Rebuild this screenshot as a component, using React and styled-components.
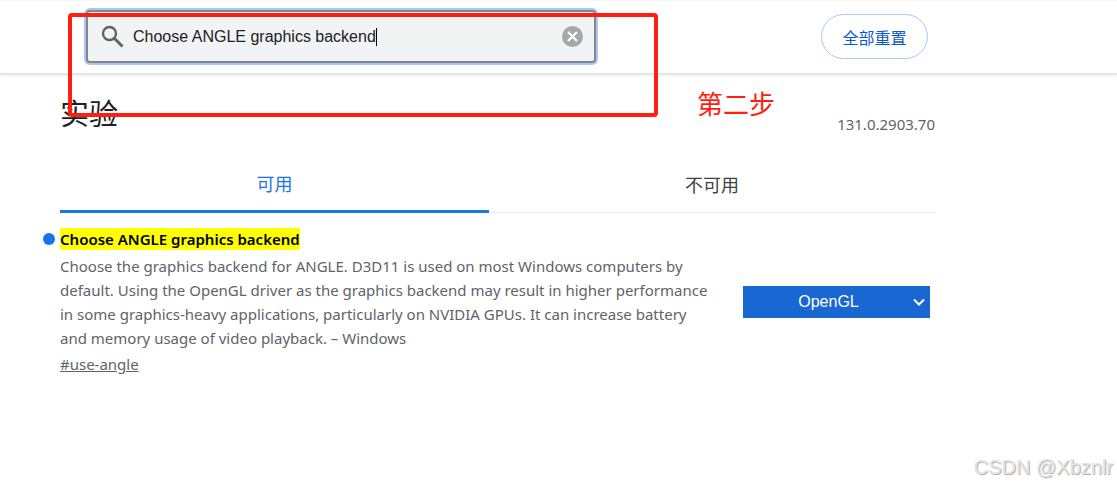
import React, { useState } from "react";
import styled, { createGlobalStyle } from "styled-components";

const GlobalStyle = createGlobalStyle`
  * {
    box-sizing: border-box;
  }

  body {
    margin: 0;
    background: #fff;
    color: #202124;
    font-family: "Noto Sans", "Noto Sans CJK SC", sans-serif;
    font-size: 15px;
  }
`;

const Page = styled.div`
  position: relative;
  min-height: 100vh;
`;

const Header = styled.header`
  border-top: 1px solid #f8f8f8;
  box-shadow: 0 1px 3px 1px rgba(0, 0, 0, 0.14);
`;

const HeaderInner = styled.div`
  display: flex;
  align-items: center;
  justify-content: space-between;
  max-width: 928px;
  padding: 9px 0 10px 86px;
`;

const SearchBox = styled.div`
  display: flex;
  align-items: center;
  flex: 0 1 510px;
  height: 53px;
  padding: 0 11px 0 13px;
  background: #f1f3f4;
  border: 2px solid #858585;
  border-radius: 4px;
  box-shadow: 0 0 0 2px #a8c7fa;
`;

const SearchIcon = styled.svg`
  flex: none;
  width: 24px;
  height: 24px;
  margin-right: 8px;
`;

const SearchInput = styled.input`
  field-sizing: content;
  min-width: 1px;
  padding: 0;
  border: 0;
  outline: 0;
  background: none;
  color: #202124;
  font-family: "Liberation Sans", Arial, sans-serif;
  font-size: 16px;
  line-height: 20px;
`;

const Caret = styled.span`
  width: 1px;
  height: 18px;
  background: #000;
`;

const ClearButton = styled.button`
  display: flex;
  margin-left: auto;
  padding: 0;
  border: 0;
  background: none;
  cursor: pointer;
`;

const ResetButton = styled.button`
  width: 107px;
  height: 45px;
  padding: 0;
  border: 1px solid #a8c7fa;
  border-radius: 23px;
  background: #fff;
  color: #0b57d0;
  font-family: inherit;
  font-size: 16px;
  cursor: pointer;
`;

const Content = styled.main`
  max-width: 935px;
  padding: 20px 0 0 60px;
`;

const TitleRow = styled.div`
  display: flex;
  align-items: flex-end;
  justify-content: space-between;
`;

const Title = styled.h1`
  margin: 0;
  font-size: 29px;
  font-weight: 400;
  line-height: 42px;
`;

const Version = styled.span`
  color: #5f6368;
  font-size: 15px;
  line-height: 22px;
`;

const Tabs = styled.div`
  display: flex;
  margin-top: 20px;
`;

const Tab = styled.button`
  flex: ${({ $active }) => ($active ? "0 1 429px" : "1 1 0")};
  height: 58px;
  padding: 0;
  border: 0;
  border-bottom: ${({ $active }) =>
    $active ? "3px solid #1a73e8" : "1px solid #ececec"};
  background: none;
  color: ${({ $active }) => ($active ? "#1a73e8" : "#3c4043")};
  font-family: inherit;
  font-size: 18px;
  cursor: pointer;
`;

const Experiment = styled.section`
  display: flex;
  align-items: center;
  justify-content: space-between;
  padding: 15px 5px 0 0;
`;

const ExperimentText = styled.div`
  flex: 0 1 655px;
`;

const Name = styled.h2`
  display: flex;
  align-items: center;
  margin: 0 0 0 -17px;
  color: #000;
  font-size: 15px;
  font-weight: 600;
  line-height: 22px;

  &::before {
    content: "";
    width: 12px;
    height: 12px;
    margin-right: 5px;
    border-radius: 50%;
    background: #1a73e8;
  }
`;

const Highlight = styled.mark`
  background: #ff0;
  color: #000;
`;

const Description = styled.p`
  margin: 4px 0 3px;
  color: #5f6368;
  line-height: 24px;
`;

const Permalink = styled.a`
  color: #5f6368;
  line-height: 22px;
`;

const SelectWrap = styled.div`
  display: grid;
  align-items: center;
  width: 187px;
`;

const Select = styled.select`
  grid-area: 1 / 1;
  height: 32px;
  padding: 0 16px 0 0;
  appearance: none;
  border: 0;
  border-radius: 0;
  background: #1967d2;
  color: #fff;
  font-family: "Liberation Sans", Arial, sans-serif;
  font-size: 16px;
  text-align: center;
  text-align-last: center;
`;

const Chevron = styled.svg`
  grid-area: 1 / 1;
  justify-self: end;
  width: 12px;
  height: 8px;
  margin-right: 5px;
  pointer-events: none;
`;

/* Annotation layer drawn over the page */
const StepFrame = styled.div`
  position: absolute;
  top: 13px;
  left: 68px;
  width: 590px;
  height: 104px;
  border: 4px solid #ff1e10;
  border-radius: 4px;
  pointer-events: none;
`;

const StepLabel = styled.span`
  position: absolute;
  top: 85px;
  left: 697px;
  color: #ff1e10;
  font-size: 26px;
  line-height: 38px;
`;

const Watermark = styled.span`
  position: absolute;
  right: 4px;
  bottom: 6px;
  color: #e4e4e4;
  font-family: "Liberation Sans", Arial, sans-serif;
  font-size: 20px;
  line-height: 28px;
  text-shadow: 1px 1px 1px #aaa;
`;

const App = () => {
  const [query, setQuery] = useState("Choose ANGLE graphics backend");
  const [tab, setTab] = useState("可用");

  return (
    <>
      <GlobalStyle />
      <Page>
        <Header>
          <HeaderInner>
            <SearchBox>
              <SearchIcon viewBox="0 0 24 24" aria-hidden="true">
                <circle
                  cx="8.5"
                  cy="8.5"
                  r="6.5"
                  fill="none"
                  stroke="#5f6368"
                  strokeWidth="2.4"
                />
                <path
                  d="M13.5 13.5 L21.5 21.5"
                  stroke="#5f6368"
                  strokeWidth="3"
                />
              </SearchIcon>
              <SearchInput
                type="text"
                aria-label="搜索标志"
                value={query}
                onChange={(e) => setQuery(e.target.value)}
              />
              <Caret />
              <ClearButton aria-label="清除" onClick={() => setQuery("")}>
                <svg width="21" height="21" viewBox="0 0 21 21">
                  <circle cx="10.5" cy="10.5" r="10.5" fill="#a5a8ab" />
                  <path
                    d="M6 6 L15 15 M15 6 L6 15"
                    stroke="#fff"
                    strokeWidth="2.2"
                  />
                </svg>
              </ClearButton>
            </SearchBox>
            <ResetButton>全部重置</ResetButton>
          </HeaderInner>
        </Header>

        <Content>
          <TitleRow>
            <Title>实验</Title>
            <Version>131.0.2903.70</Version>
          </TitleRow>

          <Tabs role="tablist">
            {["可用", "不可用"].map((name) => (
              <Tab
                key={name}
                role="tab"
                aria-selected={tab === name}
                $active={tab === name}
                onClick={() => setTab(name)}
              >
                {name}
              </Tab>
            ))}
          </Tabs>

          <Experiment>
            <ExperimentText>
              <Name>
                <Highlight>Choose ANGLE graphics backend</Highlight>
              </Name>
              <Description>
                Choose the graphics backend for ANGLE. D3D11 is used on most
                Windows computers by default. Using the OpenGL driver as the
                graphics backend may result in higher performance in some
                graphics-heavy applications, particularly on NVIDIA GPUs. It can
                increase battery and memory usage of video playback. – Windows
              </Description>
              <Permalink href="#use-angle">#use-angle</Permalink>
            </ExperimentText>
            <SelectWrap>
              <Select
                aria-label="Choose ANGLE graphics backend"
                defaultValue="OpenGL"
              >
                <option>Default</option>
                <option>OpenGL</option>
                <option>D3D11</option>
              </Select>
              <Chevron viewBox="0 0 12 8" aria-hidden="true">
                <path
                  d="M1 1.5 L6 6.5 L11 1.5"
                  fill="none"
                  stroke="#fff"
                  strokeWidth="2"
                />
              </Chevron>
            </SelectWrap>
          </Experiment>
        </Content>

        <StepFrame />
        <StepLabel>第二步</StepLabel>
        <Watermark>CSDN @Xbznlr</Watermark>
      </Page>
    </>
  );
};

export default App;
